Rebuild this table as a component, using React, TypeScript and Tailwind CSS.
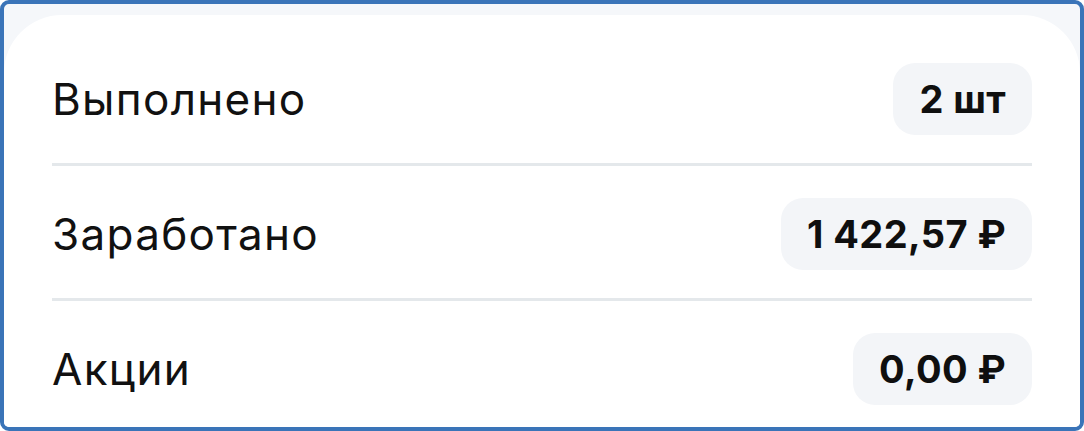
import React from 'react';

interface StatRowProps {
  label: string;
  value: string;
  last?: boolean;
}

const StatRow: React.FC<StatRowProps> = ({ label, value, last }) => (
  <div>
    <div className="flex items-center justify-between pt-[32px] pb-[28px]">
      <span className="text-[44px] leading-none text-[#111111] tracking-[1.3px]">{label}</span>
      <span className="h-[72px] flex items-center px-[26px] rounded-[22px] bg-[#f3f5f8] text-[38px] font-bold leading-none text-[#0f0f0f] tracking-[0.4px]">
        {value}
      </span>
    </div>
    {!last && <div className="h-[3px] bg-[#e4e8eb]" />}
  </div>
);

const App: React.FC = () => {
  const stats = [
    { label: 'Выполнено', value: '2 шт' },
    { label: 'Заработано', value: '1 422,57 ₽' },
    { label: 'Акции', value: '0,00 ₽' },
  ];

  return (
    <div className="w-[1084px] h-[431px] overflow-hidden border-[4px] border-[#3a74b8] rounded-[9px] bg-[#f5f7fa] pt-[11px] font-['Inter',sans-serif]">
      <div className="h-full bg-white rounded-t-[58px] px-[48px] pt-[16px]">
        {stats.map((s, i) => (
          <StatRow key={i} label={s.label} value={s.value} last={i === stats.length - 1} />
        ))}
      </div>
    </div>
  );
};

export default App;
